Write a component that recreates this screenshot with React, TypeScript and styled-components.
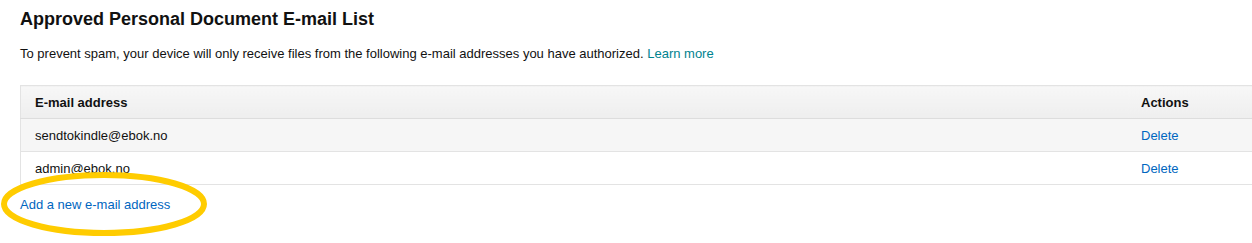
import React from "react";
import styled, { createGlobalStyle } from "styled-components";

const GlobalStyle = createGlobalStyle`
  body {
    margin: 0;
    background: #ffffff;
    font-family: Arial, "Liberation Sans", sans-serif;
    color: #111111;
    overflow: hidden;
  }
`;

const Page = styled.div`
  position: relative;
  box-sizing: border-box;
  min-height: 243px;
  padding: 8px 20px 0 20px;
  width: 1300px;
`;

const Title = styled.h1`
  margin: 0;
  font-size: 18px;
  line-height: 22px;
  font-weight: 700;
  color: #111111;
`;

const Intro = styled.p`
  margin: 15px 0 0 0;
  font-size: 13px;
  line-height: 18px;
  color: #111111;
`;

const Link = styled.a`
  color: ${({ color }) => color || "#0066c0"};
  text-decoration: none;
  cursor: pointer;
`;

const Table = styled.table`
  margin-top: 22px;
  width: 1262px;
  border-collapse: collapse;
  font-size: 13px;
  border: 1px solid #e3e3e3;
  border-right: none;
`;

const HeadCell = styled.th<{ $w?: number }>`
  height: 32px;
  padding: 0 14px;
  text-align: left;
  font-weight: 700;
  color: #111111;
  width: ${({ $w }) => ($w ? `${$w}px` : "auto")};
  background: linear-gradient(to bottom, #f7f7f7, #eeeeee);
  border-bottom: 1px solid #dddddd;
`;

const Row = styled.tr<{ $shade?: boolean }>`
  background: ${({ $shade }) => ($shade ? "#f6f6f6" : "#ffffff")};
`;

const Cell = styled.td`
  height: 32px;
  padding: 0 14px;
  color: #111111;
  border-top: 1px solid #e3e3e3;
`;

const AddLink = styled.div`
  margin-top: 12px;
  font-size: 13px;
  line-height: 16px;
`;

const Highlight = styled.svg`
  position: absolute;
  left: 0;
  top: 170px;
  pointer-events: none;
`;

const emails = ["sendtokindle@ebok.no", "admin@ebok.no"];

export default function App() {
  return (
    <>
      <GlobalStyle />
      <Page>
        <Title>Approved Personal Document E-mail List</Title>
        <Intro>
          To prevent spam, your device will only receive files from the following e-mail addresses you have authorized.{" "}
          <Link color="#00838f">Learn more</Link>
        </Intro>
        <Table>
          <thead>
            <tr>
              <HeadCell>E-mail address</HeadCell>
              <HeadCell $w={127}>Actions</HeadCell>
            </tr>
          </thead>
          <tbody>
            {emails.map((email, i) => (
              <Row key={email} $shade={i % 2 === 0}>
                <Cell>{email}</Cell>
                <Cell>
                  <Link>Delete</Link>
                </Cell>
              </Row>
            ))}
          </tbody>
        </Table>
        <AddLink>
          <Link>Add a new e-mail address</Link>
        </AddLink>
        <Highlight width="212" height="72" viewBox="0 0 212 72">
          <ellipse cx="104" cy="34" rx="100" ry="29" fill="none" stroke="#ffcc00" strokeWidth="6" />
        </Highlight>
      </Page>
    </>
  );
}
